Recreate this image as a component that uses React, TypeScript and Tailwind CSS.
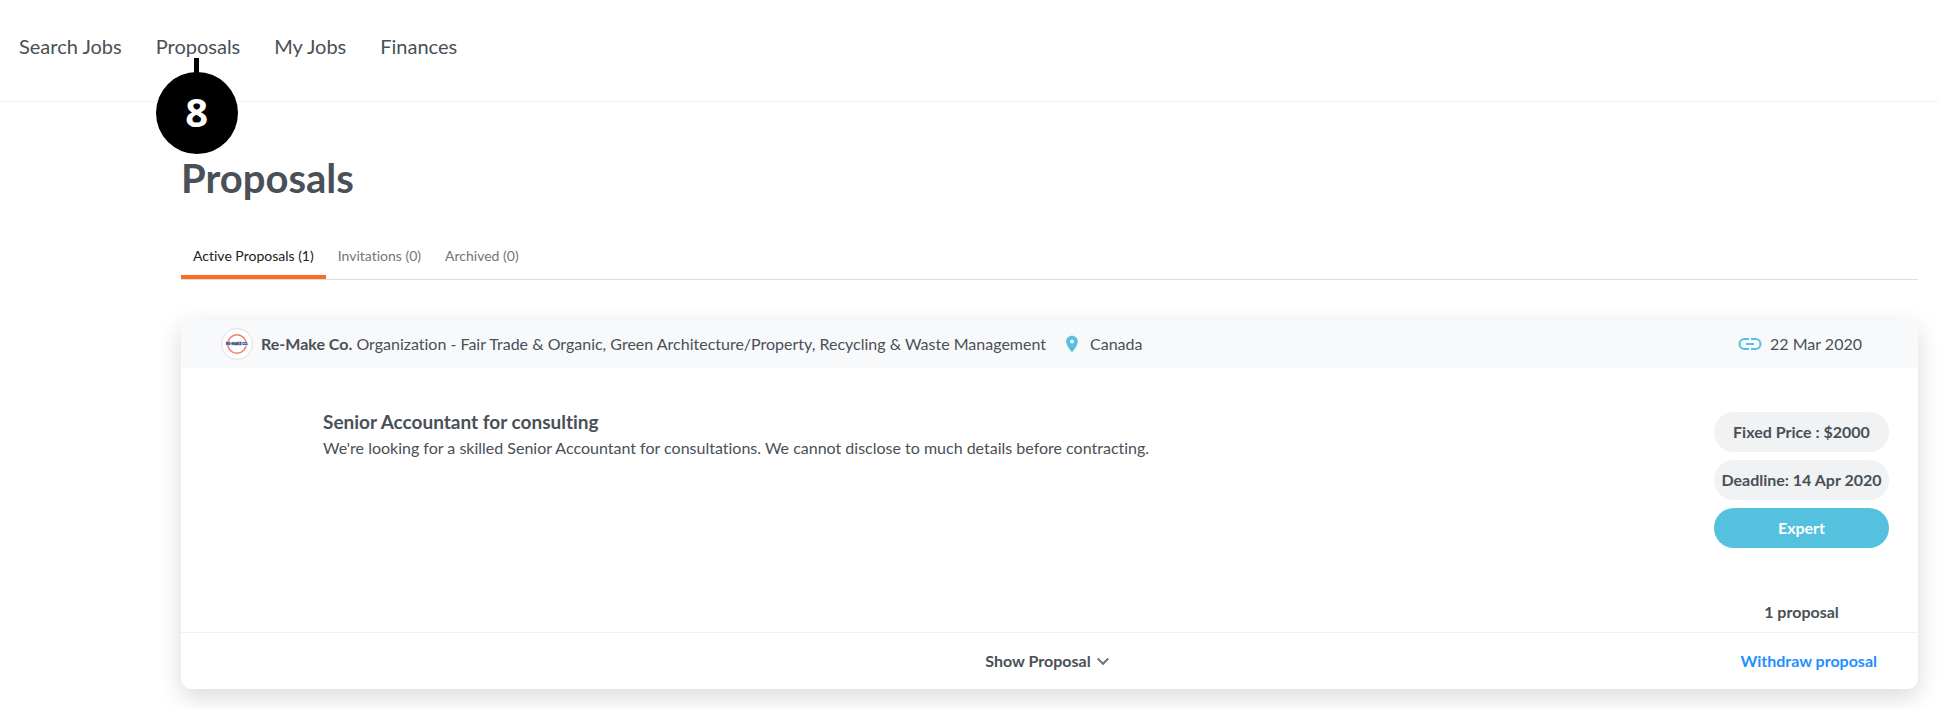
import { useState } from "react";
import { MdLocationOn } from "react-icons/md";

const navLinks = ["Search Jobs", "Proposals", "My Jobs", "Finances"];

const tabs = ["Active Proposals (1)", "Invitations (0)", "Archived (0)"];

function StepMarker({ step }: { step: number }) {
	return (
		<div className="absolute top-full left-0 flex flex-col items-center">
			<div className="h-4 w-[5px] bg-black"></div>
			<div className="-mt-0.5 flex h-[82px] w-[82px] items-center justify-center rounded-full bg-black pb-0.5 font-['Open_Sans',sans-serif] text-[40px] leading-none font-bold text-white">
				{step}
			</div>
		</div>
	);
}

function CompanyLogo() {
	return (
		<svg
			className="h-8 w-8 shrink-0"
			viewBox="0 0 32 32"
			role="img"
			aria-label="Re-Make Co."
		>
			<circle cx="16" cy="16" r="15.5" fill="#fff" stroke="#dcdfe3" />
			<circle
				cx="16"
				cy="16"
				r="9.3"
				fill="none"
				stroke="#ee7f70"
				strokeWidth="1.5"
			/>
			<rect x="5" y="14.2" width="22" height="3.6" fill="#fff" />
			<text
				x="16"
				y="17.3"
				textAnchor="middle"
				fontFamily="Lato, sans-serif"
				fontSize="3.4"
				fontWeight="900"
				fill="#34477e"
				stroke="#34477e"
				strokeWidth="0.3"
			>
				RE-MAKE CO.
			</text>
		</svg>
	);
}

function ProposalCard() {
	const [open, setOpen] = useState(false);

	return (
		<article className="rounded-b-[10px] bg-white shadow-[0_8px_24px_rgba(0,0,0,0.15)]">
			<header className="flex h-12 items-center bg-[#f7f9fb] pr-14 pl-10">
				<CompanyLogo />
				<p className="ml-2">
					<strong className="font-bold">Re-Make Co.</strong>{" "}
					Organization - Fair Trade &amp; Organic, Green
					Architecture/Property, Recycling &amp; Waste Management
				</p>
				<MdLocationOn className="mr-2 ml-4 size-5 text-[#54c1de]" />
				<span>Canada</span>
				<svg
					className="mr-2 ml-auto size-6 text-[#54c1de]"
					viewBox="0 0 24 24"
					fill="none"
					stroke="currentColor"
					strokeWidth="2"
					aria-hidden="true"
				>
					<path d="M11 7H6.500a5 5 0 0 0 0 10H11M13 7h4.500a5 5 0 0 1 0 10H13M8 12h8" />
				</svg>
				<time dateTime="2020-03-22">22 Mar 2020</time>
			</header>
			<div className="flex justify-between pt-11 pr-[29px] pb-2 pl-[142px]">
				<div className="-mt-0.5">
					<h2 className="text-[19px] leading-6 font-bold">
						Senior Accountant for consulting
					</h2>
					<p className="mt-0.5">
						We're looking for a skilled Senior Accountant for
						consultations. We cannot disclose to much details before
						contracting.
					</p>
				</div>
				<div className="flex w-[175px] flex-col gap-2 text-center font-bold">
					<span className="rounded-full bg-[#f1f2f4] py-2 whitespace-nowrap">
						Fixed Price : $2000
					</span>
					<span className="rounded-full bg-[#f1f2f4] py-2 whitespace-nowrap">
						Deadline: 14 Apr 2020
					</span>
					<span className="rounded-full bg-[#54c1de] py-2 text-white">
						Expert
					</span>
					<span className="mt-11">1 proposal</span>
				</div>
			</div>
			<footer className="grid h-[57px] grid-cols-[1fr_auto_1fr] items-center border-t border-[#f0f1f2] pr-[41px] font-bold">
				<button
					type="button"
					aria-expanded={open}
					onClick={() => setOpen((prev) => !prev)}
					className="col-start-2 ml-9 flex cursor-pointer items-center gap-1.5"
				>
					Show Proposal
					<svg
						className="h-3 w-3"
						viewBox="0 0 12 12"
						fill="none"
						stroke="#757575"
						strokeWidth="2"
						aria-hidden="true"
					>
						<path d="M.7 3.500 6 8.800 11.300 3.500" />
					</svg>
				</button>
				<button
					type="button"
					className="cursor-pointer justify-self-end text-[#1e90ff]"
				>
					Withdraw proposal
				</button>
			</footer>
		</article>
	);
}

export default function App() {
	const [activeTab, setActiveTab] = useState(tabs[0]);

	return (
		<div className="bg-white pb-5 font-[Lato,sans-serif] text-base text-[#495057] [font-variant-ligatures:none]">
			<nav className="flex h-[102px] gap-[34px] border-b border-[#f0f1f2] px-[19px] pt-[34px] text-xl leading-6">
				{navLinks.map((link) => (
					<div key={link} className="relative h-6">
						<a href="#">{link}</a>
						{link === "Proposals" && <StepMarker step={8} />}
					</div>
				))}
			</nav>
			<main className="pt-[52px] pr-5 pl-[181px]">
				<h1 className="text-[40px] leading-[48px] font-bold">
					Proposals
				</h1>
				<div
					role="tablist"
					className="mt-[34px] flex h-11 border-b border-[#dcdee0] text-sm"
				>
					{tabs.map((tab) => (
						<button
							key={tab}
							type="button"
							role="tab"
							aria-selected={tab === activeTab}
							onClick={() => setActiveTab(tab)}
							className={
								tab === activeTab
									? "cursor-pointer border-b-4 border-[#ff6b20] px-3 text-[#212121]"
									: "cursor-pointer border-b-4 border-transparent px-3 text-[#757575]"
							}
						>
							{tab}
						</button>
					))}
				</div>
				<section className="mt-10">
					<ProposalCard />
				</section>
			</main>
		</div>
	);
}
